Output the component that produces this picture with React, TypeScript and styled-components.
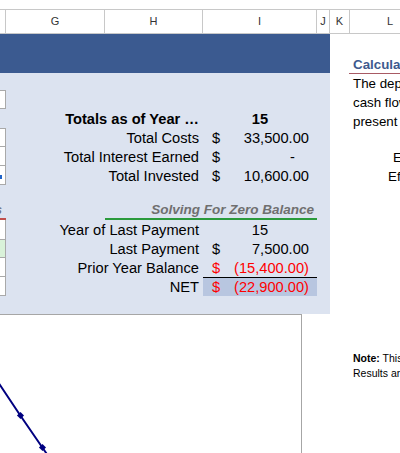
import React from 'react';
import styled, { createGlobalStyle } from 'styled-components';

const GlobalStyle = createGlobalStyle`
  html, body {
    margin: 0;
    padding: 0;
    background: #ffffff;
    overflow: hidden;
  }
  body {
    font-family: 'Liberation Sans', Arial, sans-serif;
    color: #000000;
  }
  * {
    box-sizing: border-box;
  }
`;

const headerColumns = ['', 'G', 'H', 'I', 'J', 'K', 'L'];

const totals = [
  { label: 'Total Costs', value: '33,500.00', dash: false },
  { label: 'Total Interest Earned', value: '-', dash: true },
  { label: 'Total Invested', value: '10,600.00', dash: false },
];

const App = () => {
  return (
    <>
      <GlobalStyle />
      <Page>
        <ColumnHeader>
          {headerColumns.map((letter, i) => (
            <HeaderCell key={i}>{letter}</HeaderCell>
          ))}
          <HeaderRest />
        </ColumnHeader>
        <Sheet>
          <LeftArea>
            <Banner />
            <Panel>
              <Row $h={17} />
              <Row $h={19}>
                <FCell $input $top />
              </Row>
              <Row $h={19}>
                <LabelCell $bold>Totals as of Year …</LabelCell>
                <CenterCell $bold>15</CenterCell>
              </Row>
              {totals.map((t, i) => (
                <Row $h={19} key={t.label}>
                  <FCell $input $top={i === 0}>
                    {i === 2 && <Marker />}
                  </FCell>
                  <LabelCell>{t.label}</LabelCell>
                  <ValueCell>
                    <span>$</span>
                    <Amount $dash={t.dash}>{t.value}</Amount>
                  </ValueCell>
                </Row>
              ))}
              <Row $h={16} />
              <Row $h={19}>
                <FHeading>Payments</FHeading>
                <SolvingCell>Solving For Zero Balance</SolvingCell>
              </Row>
              <Row $h={20}>
                <FCell $input />
                <LabelCell>Year of Last Payment</LabelCell>
                <CenterCell>15</CenterCell>
              </Row>
              <Row $h={18}>
                <FCell $input $tint="#d9f2d9" />
                <LabelCell>Last Payment</LabelCell>
                <ValueCell>
                  <span>$</span>
                  <Amount>7,500.00</Amount>
                </ValueCell>
              </Row>
              <Row $h={19}>
                <FCell $input />
                <LabelCell>Prior Year Balance</LabelCell>
                <ValueCell $red>
                  <span>$</span>
                  <Amount>(15,400.00)</Amount>
                </ValueCell>
              </Row>
              <Row $h={19}>
                <FCell $input />
                <LabelCell>NET</LabelCell>
                <ValueCell $red $net>
                  <span>$</span>
                  <Amount>(22,900.00)</Amount>
                </ValueCell>
              </Row>
            </Panel>
            <ChartBox>
              <svg width="100%" height="100%">
                <polyline
                  points="-10,55 20,100 42,132 60,158"
                  fill="none"
                  stroke="#000080"
                  strokeWidth="2"
                />
                <rect x="18" y="98" width="5" height="5" fill="#000080" transform="rotate(45 20.5 100.5)" />
                <rect x="40" y="130" width="5" height="5" fill="#000080" transform="rotate(45 42.5 132.5)" />
              </svg>
            </ChartBox>
          </LeftArea>
          <RightArea>
            <Heading>Calculation Notes</Heading>
            <Para>The deposits are treated as regular</Para>
            <Para>cash flows and discounted to the</Para>
            <Para>present value at the stated rate.</Para>
            <Centered $indent={44} $gap={17}>Expected Return</Centered>
            <Centered $indent={39}>Effective Annual Rate</Centered>
            <Note>
              <b>Note:</b> This worksheet is for illustration only.
              <br />
              Results are estimates and may vary.
            </Note>
          </RightArea>
        </Sheet>
      </Page>
    </>
  );
};

const Page = styled.div`
  width: 100%;
  padding-top: 9px;
`;

const ColumnHeader = styled.div`
  display: grid;
  grid-template-columns: 6px 99px 98px 114px 13px 20px 81px 1fr;
  height: 25px;
  border-top: 1px solid #c8c8c8;
  border-bottom: 1px solid #c8c8c8;
`;

const HeaderCell = styled.div`
  border-right: 1px solid #c8c8c8;
  text-align: center;
  font-size: 11px;
  line-height: 23px;
  color: #333333;
`;

const HeaderRest = styled.div``;

const Sheet = styled.div`
  display: flex;
`;

const LeftArea = styled.div`
  width: 330px;
  flex: none;
`;

const Banner = styled.div`
  height: 39px;
  background: #3b5a90;
`;

const Panel = styled.div`
  background: #dce3f0;
  height: 241px;
`;

const Row = styled.div<{ $h: number }>`
  display: grid;
  grid-template-columns: 6px 99px 98px 114px 13px;
  height: ${p => p.$h}px;
  font-size: 14.67px;
`;

const FCell = styled.div<{ $input?: boolean; $top?: boolean; $tint?: string }>`
  grid-column: 1;
  position: relative;
  background: ${p => (p.$input ? p.$tint || '#ffffff' : 'transparent')};
  border-right: ${p => (p.$input ? '1px solid #a9a9a9' : 'none')};
  border-bottom: ${p => (p.$input ? '1px solid #a9a9a9' : 'none')};
  border-top: ${p => (p.$top ? '1px solid #a9a9a9' : 'none')};
`;

const Marker = styled.span`
  position: absolute;
  left: 0;
  top: 9px;
  width: 2px;
  height: 4px;
  background: #1f63c8;
`;

const FHeading = styled.div`
  grid-column: 1;
  display: flex;
  justify-content: flex-end;
  align-items: flex-end;
  overflow: hidden;
  white-space: nowrap;
  padding-right: 4px;
  padding-bottom: 1px;
  border-bottom: 2px solid #c0504d;
  font-size: 13.5px;
  font-weight: bold;
  font-style: italic;
  color: #6f7585;
`;

const LabelCell = styled.div<{ $bold?: boolean }>`
  grid-column: 2 / 4;
  display: flex;
  justify-content: flex-end;
  align-items: center;
  padding-right: 4px;
  white-space: nowrap;
  font-weight: ${p => (p.$bold ? 'bold' : 'normal')};
`;

const CenterCell = styled.div<{ $bold?: boolean }>`
  grid-column: 4;
  display: flex;
  justify-content: center;
  align-items: center;
  font-weight: ${p => (p.$bold ? 'bold' : 'normal')};
`;

const ValueCell = styled.div<{ $red?: boolean; $net?: boolean }>`
  grid-column: 4;
  display: flex;
  justify-content: space-between;
  align-items: center;
  padding: 0 8px 0 9px;
  color: ${p => (p.$red ? '#ff0000' : '#000000')};
  background: ${p => (p.$net ? '#b8c6e0' : 'transparent')};
  border-top: ${p => (p.$net ? '1px solid #000000' : 'none')};
`;

const Amount = styled.span<{ $dash?: boolean }>`
  padding-right: ${p => (p.$dash ? '14px' : '0')};
`;

const SolvingCell = styled.div`
  grid-column: 3 / 5;
  display: flex;
  justify-content: flex-end;
  align-items: flex-end;
  padding-right: 3px;
  padding-bottom: 1px;
  white-space: nowrap;
  border-bottom: 2px solid #2a9a3c;
  font-size: 13.5px;
  font-weight: bold;
  font-style: italic;
  color: #6f6f6f;
`;

const ChartBox = styled.div`
  width: 302px;
  height: 160px;
  background: #ffffff;
  border-top: 1px solid #a6a6a6;
  border-right: 1px solid #a6a6a6;
`;

const RightArea = styled.div`
  flex: none;
  width: 300px;
  margin-left: 19px;
  padding-top: 23px;
  white-space: nowrap;
`;

const Heading = styled.div`
  height: 17px;
  line-height: 16px;
  padding-left: 4px;
  font-size: 13.33px;
  font-weight: bold;
  color: #3e5a8e;
  border-bottom: 1px solid #a85a64;
`;

const Para = styled.div`
  padding-left: 4px;
  font-size: 13.33px;
  line-height: 19px;
  color: #000000;
`;

const Centered = styled.div<{ $indent: number; $gap?: number }>`
  padding-left: ${p => p.$indent}px;
  margin-top: ${p => p.$gap || 0}px;
  font-size: 13.33px;
  line-height: 19px;
`;

const Note = styled.div`
  margin-top: 165px;
  padding-left: 4px;
  font-size: 10.5px;
  line-height: 15px;
`;

export default App;
